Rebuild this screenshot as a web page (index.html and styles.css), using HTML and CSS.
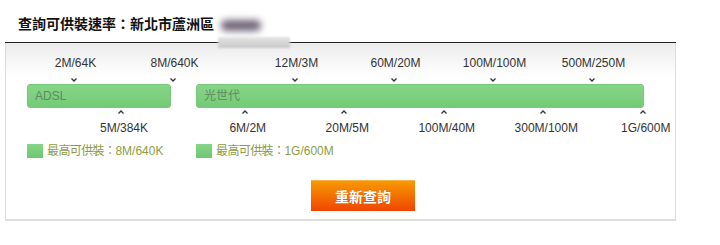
FILE: index.html
```html
<!DOCTYPE html>
<html lang="zh-Hant">
<head>
<meta charset="UTF-8">
<title>查詢可供裝速率</title>
<link rel="stylesheet" href="styles.css">
</head>
<body>

<div class="wrap">
    <h2 class="title">查詢可供裝速率：新北市蘆洲區<span class="blur-addr"></span></h2>
    <span class="blur-box"></span>

    <div class="panel">
        <!-- top speed labels -->
        <div class="scale scale-top">
            <div class="tick">2M/64K<svg viewBox="0 0 6 4"><polyline points="0.5,0.5 3,3 5.5,0.5"/></svg></div>
            <div class="tick">8M/640K<svg viewBox="0 0 6 4"><polyline points="0.5,0.5 3,3 5.5,0.5"/></svg></div>
            <div class="tick tick-gap">12M/3M<svg viewBox="0 0 6 4"><polyline points="0.5,0.5 3,3 5.5,0.5"/></svg></div>
            <div class="tick">60M/20M<svg viewBox="0 0 6 4"><polyline points="0.5,0.5 3,3 5.5,0.5"/></svg></div>
            <div class="tick">100M/100M<svg viewBox="0 0 6 4"><polyline points="0.5,0.5 3,3 5.5,0.5"/></svg></div>
            <div class="tick">500M/250M<svg viewBox="0 0 6 4"><polyline points="0.5,0.5 3,3 5.5,0.5"/></svg></div>
        </div>

        <div class="bars">
            <div class="bar bar-adsl">ADSL</div>
            <div class="bar bar-fiber">光世代</div>
        </div>

        <!-- bottom speed labels -->
        <div class="scale scale-bottom">
            <div class="tick tick-first"><svg viewBox="0 0 6 4"><polyline points="0.5,3.5 3,1 5.5,3.5"/></svg><span>5M/384K</span></div>
            <div class="tick tick-gap2"><svg viewBox="0 0 6 4"><polyline points="0.5,3.5 3,1 5.5,3.5"/></svg><span>6M/2M</span></div>
            <div class="tick"><svg viewBox="0 0 6 4"><polyline points="0.5,3.5 3,1 5.5,3.5"/></svg><span>20M/5M</span></div>
            <div class="tick"><svg viewBox="0 0 6 4"><polyline points="0.5,3.5 3,1 5.5,3.5"/></svg><span>100M/40M</span></div>
            <div class="tick"><svg viewBox="0 0 6 4"><polyline points="0.5,3.5 3,1 5.5,3.5"/></svg><span>300M/100M</span></div>
            <div class="tick"><svg viewBox="0 0 6 4"><polyline points="0.5,3.5 3,1 5.5,3.5"/></svg><span>1G/600M</span></div>
        </div>

        <div class="legend">
            <div class="legend-item legend-adsl"><span class="swatch"></span><span class="cjk">最高可供裝：</span>8M/640K</div>
            <div class="legend-item"><span class="swatch"></span><span class="cjk">最高可供裝：</span>1G/600M</div>
        </div>

        <div class="actions">
            <input type="button" class="btn-query" value="重新查詢">
        </div>
    </div>
</div>

</body>
</html>
```

FILE: styles.css
```css
body {
    margin: 0;
    background-color: #fff;
    font-family: "Liberation Sans", Arial, "Noto Sans CJK TC", sans-serif;
    color: #333;
}
.wrap {
    position: relative;
    width: 671px;
    margin-left: 5px;
}
.title {
    margin: 0;
    height: 43px;
    padding-left: 13px;
    box-sizing: border-box;
    padding-top: 14px;
    font-family: "Noto Sans CJK TC", sans-serif;
    font-size: 14px;
    line-height: 18px;
    font-weight: bold;
    color: #111;
    border-bottom: 1px solid #222;
    white-space: nowrap;
}
.blur-addr {
    display: inline-block;
    width: 40px;
    height: 11px;
    margin-left: 7px;
    vertical-align: -2px;
    background: #6e6478;
    border-radius: 5px;
    filter: blur(3.5px); /* address is masked in the original */
}
.blur-box {
    position: absolute; /* covers the line, masked area */
    left: 213px;
    top: 37px;
    width: 72px;
    height: 11px;
    background: linear-gradient(#e4e4e4, #c8c8c8);
    filter: blur(1px);
}
.panel {
    height: 178px;
    padding-top: 13px;
    box-sizing: border-box;
    border: 1px solid #dcdcdc;
    border-top: none;
    border-bottom: 2px solid #dedede;
    background: linear-gradient(#ececec 0, #fff 34px);
}
.scale {
    display: flex;
    font-size: 12px;
    line-height: 15px;
}
.tick {
    flex-shrink: 0;
    width: 98px;
    display: flex;
    flex-direction: column;
    align-items: center;
    white-space: nowrap;
}
.tick svg {
    width: 6px;
    height: 4px;
    fill: none;
    stroke: #333;
    stroke-width: 1.3;
}
.scale-top {
    padding-left: 20px;
}
.scale-top .tick {
    width: 99px;
}
.scale-top .tick svg {
    margin-top: 7px;
    margin-left: -3px;
}
.scale-top .tick-gap {
    margin-left: 23px;
}
.scale-bottom .tick {
    width: 99.5px;
}
.scale-bottom .tick svg {
    margin-top: 2px;
}
.scale-bottom .tick span {
    margin-top: 7px;
    margin-left: 6px;
}
.scale-bottom .tick-first {
    margin-left: 66px;
    width: 98px;
}
.scale-bottom .tick-gap2 {
    margin-left: 25px;
}
.bars {
    display: flex;
    margin-top: 2px;
    padding-left: 21px;
}
.bar {
    flex-shrink: 0;
    height: 22px;
    line-height: 22px;
    padding-left: 7px;
    border: 1px solid #79c77b;
    border-radius: 3px;
    background: linear-gradient(#86d588, #74ca76);
    color: #5f8a60;
    font-size: 12px;
}
.bar-adsl {
    width: 135px;
}
.bar-fiber {
    width: 439px;
    margin-left: 25px;
}
.legend {
    display: flex;
    margin-top: 7px;
    padding-left: 21px;
}
.legend-item {
    display: flex;
    align-items: center;
    font-size: 12px;
    color: #8c9c44;
    line-height: 16px;
}
.legend-item .cjk {
    letter-spacing: -0.6px;
}
.legend-adsl {
    width: 169px;
}
.swatch {
    width: 16px;
    height: 14px;
    margin-right: 4px;
    background: linear-gradient(#86d588, #6ec770);
}
.actions {
    display: flex;
    margin-top: 21px;
    padding-left: 305px;
}
.btn-query {
    width: 104px;
    height: 31px;
    border: none;
    border-top: 1px solid #f9b24a;
    background: linear-gradient(#f79a00, #f04500);
    color: #fff;
    font-family: "Noto Sans CJK TC", sans-serif;
    font-size: 14px;
    font-weight: bold;
    text-shadow: 0 0 1px #c05000;
    cursor: pointer;
}
```
